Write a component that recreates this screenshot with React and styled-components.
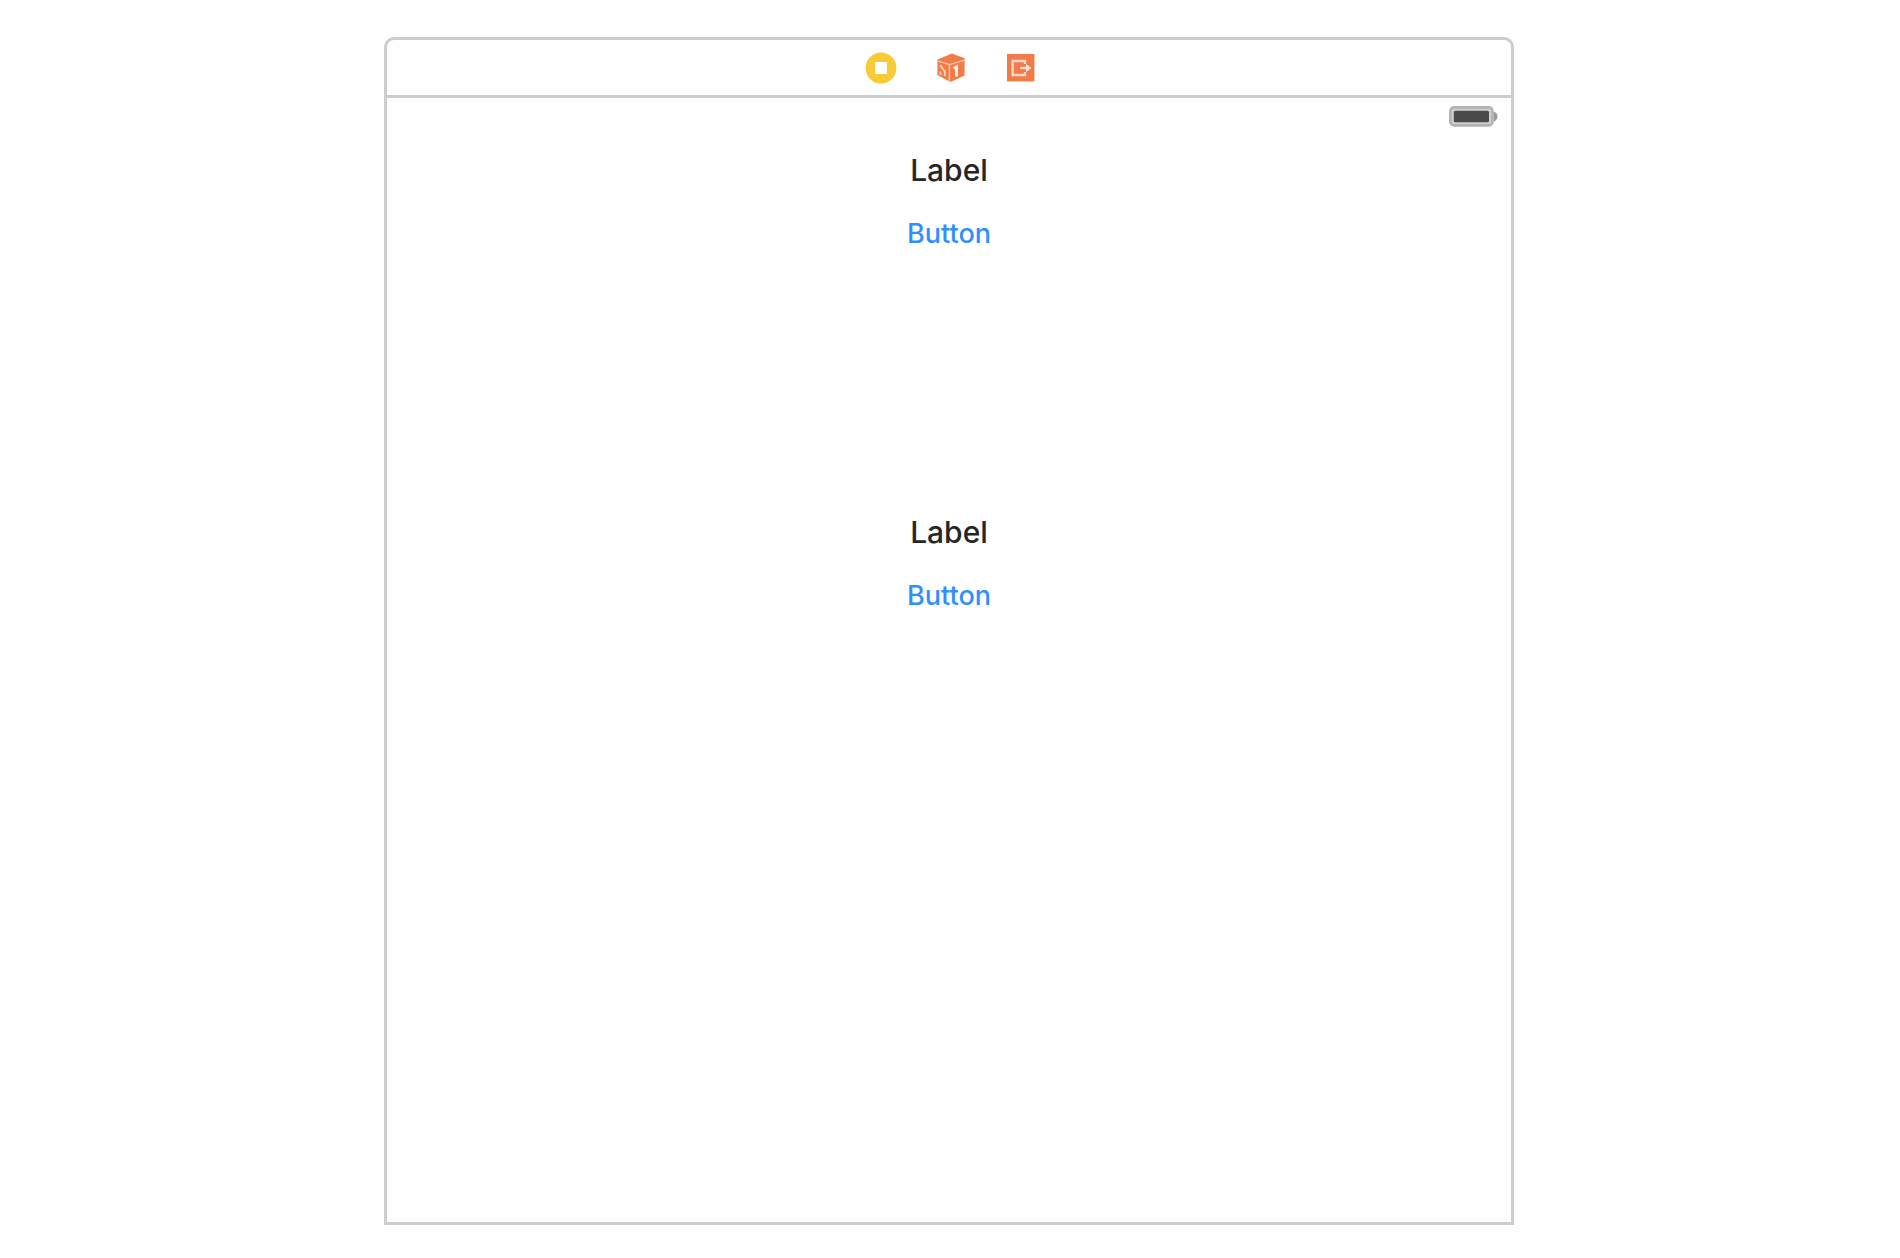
import React from "react";
import styled, { createGlobalStyle } from "styled-components";

const line = "#cdcdcd";

const GlobalStyle = createGlobalStyle`
  *, *::before, *::after { box-sizing: border-box; }
  body {
    margin: 0;
    background: #fefefe;
    font-family: Inter, Roboto, "Liberation Sans", sans-serif;
  }
`;

const Canvas = styled.div`
  display: flex;
  justify-content: center;
  min-height: 100vh;
  padding: 37px 26px 33px 24px;
`;

const Scene = styled.main`
  display: flex;
  flex-direction: column;
  width: 100%;
  max-width: 1130px;
  border: 3px solid ${line};
  border-radius: 10px 10px 0 0;
`;

const Dock = styled.header`
  display: flex;
  align-items: center;
  justify-content: center;
  gap: 38px;
  height: 58px;
  padding-left: 4px;
  border-bottom: 3px solid ${line};
`;

const DockButton = styled.button`
  display: flex;
  width: 32px;
  height: 32px;
  padding: 0;
  border: 0;
  background: none;
  cursor: pointer;
`;

const StatusBar = styled.div`
  display: flex;
  justify-content: flex-end;
  padding: 8px 13px 0 0;
`;

const View = styled.section`
  display: flex;
  flex-direction: column;
  align-items: center;
  gap: 264px;
  padding: 25px 0;
`;

const Group = styled.div`
  display: flex;
  flex-direction: column;
  align-items: center;
  gap: 30px;
`;

const Label = styled.span`
  color: #262626;
  font-size: 30px;
  font-weight: 500;
  line-height: 36px;
`;

const TextButton = styled.button`
  padding: 0;
  border: 0;
  background: none;
  color: #2f8fff;
  font-family: inherit;
  font-size: 27px;
  font-weight: 500;
  line-height: 32px;
  cursor: pointer;
`;

const ControllerIcon = () => (
  <svg width="32" height="32" viewBox="0 0 32 32" aria-hidden="true">
    <circle cx="16" cy="16" r="15.4" fill="#f8ca36" />
    <rect x="10" y="10" width="12" height="12" rx="1" fill="#fff" />
  </svg>
);

const ResponderIcon = () => (
  <svg width="32" height="32" viewBox="0 0 32 32" aria-hidden="true">
    <path d="M17 1.4 29.6 6.2V23.6L15.4 30 2.4 23V7.4Z" fill="#f27b47" />
    <path d="M3 9 14.4 12.6 29 8.4M14.4 12.6V29" fill="none" stroke="#f9c4ab" strokeWidth="1.4" />
    <path d="M5 13 9.8 19.5V24M5.4 19.5V23" fill="none" stroke="#fbd3c1" strokeWidth="1.8" />
    <path d="M18.6 16.4 21.6 14.6V24.4" fill="none" stroke="#fff0e9" strokeWidth="2.8" />
  </svg>
);

const ExitIcon = () => (
  <svg width="32" height="32" viewBox="0 0 32 32" aria-hidden="true">
    <rect x="2" y="2" width="27.4" height="27.4" fill="#f27b47" />
    <path d="M20 12V9H7.6V23H20V20" fill="none" stroke="#fcd9ca" strokeWidth="2.4" />
    <path d="M15 16H22" stroke="#fcd9ca" strokeWidth="2.4" />
    <path d="M21 12 26.6 16 21 20Z" fill="#fde6db" />
  </svg>
);

const BatteryIcon = () => (
  <svg width="49" height="21" viewBox="0 0 49 21" role="img" aria-label="Battery full">
    <path d="M44.5 5.5C47 6 48.5 8 48.5 10.4S47 15 44.5 15.4Z" fill="#9c9c9c" />
    <rect x="1.4" y="1.4" width="42" height="18" rx="3.5" fill="#d0d0d0" stroke="#b3b3b3" strokeWidth="2.6" />
    <rect x="4.8" y="4.8" width="35.2" height="11.4" rx="1.5" fill="#4b4b4b" />
  </svg>
);

const tools = [
  { name: "View Controller", Icon: ControllerIcon },
  { name: "First Responder", Icon: ResponderIcon },
  { name: "Exit", Icon: ExitIcon },
];

const groups = ["top", "middle"];

export default function App() {
  return (
    <>
      <GlobalStyle />
      <Canvas>
        <Scene>
          <Dock>
            {tools.map(({ name, Icon }) => (
              <DockButton key={name} type="button" aria-label={name}>
                <Icon />
              </DockButton>
            ))}
          </Dock>
          <StatusBar>
            <BatteryIcon />
          </StatusBar>
          <View>
            {groups.map((id) => (
              <Group key={id}>
                <Label>Label</Label>
                <TextButton type="button">Button</TextButton>
              </Group>
            ))}
          </View>
        </Scene>
      </Canvas>
    </>
  );
}
